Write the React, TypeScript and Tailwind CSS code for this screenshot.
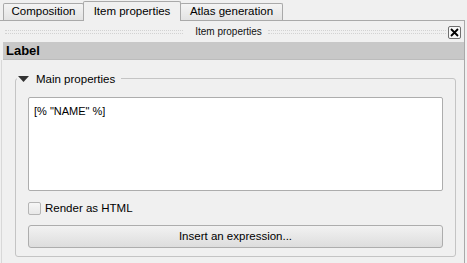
import React from 'react';

const font = { fontFamily: '"Liberation Sans", Arial, sans-serif' };

function Tab({ label, active, width }: { label: string; active?: boolean; width: string }) {
  if (active) {
    return (
      <div className={`${width} relative z-10 -mb-px h-[20px] flex items-center justify-center whitespace-nowrap border border-b-0 border-[#a9a9a9] bg-[#f0f0f0] rounded-t-[2px] text-[11.5px] text-black`}>
        {label}
      </div>
    );
  }
  return (
    <div className={`${width} h-[17px] flex items-center justify-center whitespace-nowrap border border-b-0 border-[#a9a9a9] bg-gradient-to-b from-[#f4f4f4] to-[#e3e3e3] rounded-t-[2px] text-[11.5px] text-black`}>
      {label}
    </div>
  );
}

export default function App() {
  return (
    <div className="w-[467px] h-[263px] bg-[#f0f0f0] overflow-hidden relative" style={font}>
      {/* tabs */}
      <div className="h-[20px] flex items-end pl-[3px]">
        <Tab label="Composition" width="w-[81px]" />
        <div className="-ml-px">
          <Tab label="Item properties" width="w-[98px]" active />
        </div>
        <div className="-ml-px">
          <Tab label="Atlas generation" width="w-[103px]" />
        </div>
      </div>

      {/* pane */}
      <div className="border-t border-r border-[#a9a9a9] w-[465px] h-[244px] flex flex-col">
        {/* dock title */}
        <div className="mt-[4px] h-[14px] flex items-center pl-[5px] pr-[3px]">
          <div className="flex-1 h-[4px] border-y border-dotted border-[#d2d2d2]" />
          <span className="pl-[12px] pr-[6px] text-[10px] leading-none whitespace-nowrap text-[#111]">Item properties</span>
          <div className="flex-1 h-[4px] border-y border-dotted border-[#d2d2d2]" />
          <div className="ml-[2px] w-[13px] h-[13px] border border-[#6f6f6f] rounded-[2px] bg-[#f7f7f7] flex items-center justify-center">
            <svg width="9" height="9" viewBox="0 0 9 9">
              <path d="M1 1 L8 8 M8 1 L1 8" stroke="#000" strokeWidth="1.8" />
            </svg>
          </div>
        </div>

        {/* section header */}
        <div className="mt-[3px] ml-[3px] h-[18px] bg-[#c8c8c8] border-b border-[#bcbcbc] flex items-center pl-[3px]">
          <span className="text-[13px] font-bold text-black">Label</span>
        </div>

        {/* body */}
        <div className="flex-1 ml-[1px] border-l border-[#d8d8d8] pl-[13px] pr-[8px] pt-[18px]">
          <div className="relative border border-[#c4c4c4] rounded-[3px] h-[179px] px-[12px] pt-[18px]">
            <div className="absolute -top-[8px] left-[1px] bg-[#f0f0f0] flex items-center pr-[6px] pl-[1px]">
              <svg width="11" height="7" viewBox="0 0 11 7" className="mr-[7px]">
                <path d="M0 0 L11 0 L5.5 6 Z" fill="#333" />
              </svg>
              <span className="text-[11.5px] text-black">Main properties</span>
            </div>

            <div className="h-[94px] bg-white border border-[#adadad] rounded-[2px] px-[5px] pt-[5px] text-[11px] text-black">
              [% "NAME" %]
            </div>

            <div className="mt-[9px] flex items-center">
              <div className="w-[13px] h-[13px] border border-[#b5b5b5] rounded-[2px] bg-gradient-to-b from-[#f6f6f6] to-[#e8e8e8]" />
              <span className="ml-[4px] text-[11.5px] text-black">Render as HTML</span>
            </div>

            <div className="mt-[8px] h-[23px] border border-[#adadad] rounded-[3px] bg-gradient-to-b from-[#f2f2f2] to-[#dddddd] flex items-center justify-center text-[11.5px] text-black">
              Insert an expression...
            </div>
          </div>
        </div>
      </div>
    </div>
  );
}
